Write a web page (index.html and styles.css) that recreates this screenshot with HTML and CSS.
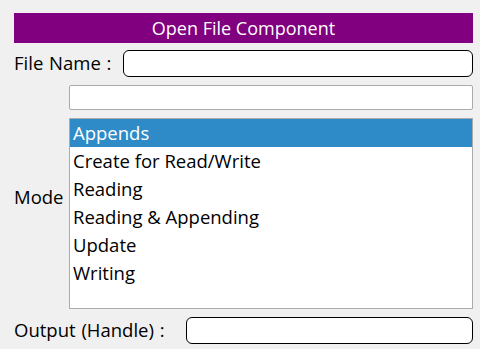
FILE: index.html
```html
<!DOCTYPE html>
<html lang="en">
<head>
    <meta charset="UTF-8">
    <meta name="viewport" content="width=device-width, initial-scale=1.0">
    <title>Open File Component</title>
    <link rel="stylesheet" href="styles.css">
</head>
<body>
    <div class="panel">
        <div class="title">Open File Component</div>

        <div class="row">
            <label class="label name-label">File Name :</label>
            <input type="text" class="field round">
        </div>

        <!-- Mode: filter box + list -->
        <div class="row mode-row">
            <label class="label mode-label">Mode</label>
            <div class="mode-col">
                <input type="text" class="field plain">
                <ul class="listbox">
                    <li class="selected">Appends</li>
                    <li>Create for Read/Write</li>
                    <li>Reading</li>
                    <li>Reading &amp; Appending</li>
                    <li>Update</li>
                    <li>Writing</li>
                </ul>
            </div>
        </div>

        <div class="row">
            <label class="label out-label">Output (Handle) :</label>
            <input type="text" class="field round">
        </div>
    </div>
</body>
</html>
```

FILE: styles.css
```css
body {
    margin: 0;
    background-color: #f0f0f0;
    color: #000;
    font-family: 'Open Sans', 'Noto Sans', sans-serif;
    font-size: 18.5px;
    line-height: 1.2;
}

.panel {
    padding: 13px 7px 0 14px;
    display: flex;
    flex-direction: column;
}

.title {
    height: 30px;
    line-height: 30px;
    background-color: #800080;
    color: #fff;
    text-align: center;
    font-size: 18px;
    margin-bottom: 7px;
}

.row {
    display: flex;
    align-items: center;
    gap: 8px;
    height: 27px;
    margin-bottom: 8px;
}

.mode-row {
    height: 224px;
}

.label {
    white-space: nowrap;
    word-spacing: 1px;
}

.name-label {
    width: 101px;
}

.mode-label {
    width: 47px;
}

.out-label {
    width: 164px;
}

.field {
    box-sizing: border-box;
    flex: 1;
    min-width: 0;
    margin: 0;
    padding: 0 4px;
    font: inherit;
    background-color: #fff;
    outline: none;
}

.round {
    height: 27px;
    border: 1px solid #000;
    border-radius: 6px;
}

.plain {
    flex: none;
    height: 25px;
    border: 1px solid #ababab;
    border-radius: 2px;
}

.mode-col {
    flex: 1;
    display: flex;
    flex-direction: column;
    gap: 8px;
}

.listbox {
    box-sizing: border-box;
    height: 191px;
    margin: 0;
    padding: 0;
    list-style: none;
    background-color: #fff;
    border: 1px solid #ababab;
}

.listbox li {
    height: 28px;
    line-height: 28px;
    padding-left: 3px;
}

.listbox li.selected {
    background-color: #2e8bc8;
    color: #fff;
}
```
